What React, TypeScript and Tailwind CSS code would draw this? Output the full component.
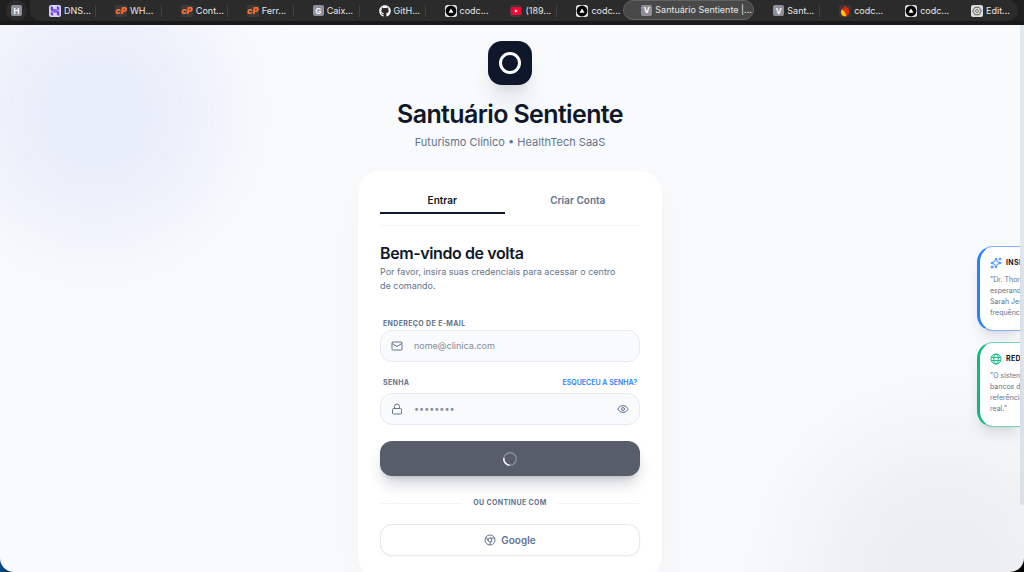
import React, { useState } from "react";
import { Eye, Lock, Sparkles } from "lucide-react";
import { FaGithub } from "react-icons/fa";
import { SiHostinger } from "react-icons/si";

const LetterIcon = ({ letter }: { letter: string }) => (
  <span className="flex size-[11px] shrink-0 items-center justify-center rounded-[2px] bg-[#8e8e9c] text-[8px] font-bold text-white">
    {letter}
  </span>
);

const CpanelIcon = () => (
  <span className="flex size-3 shrink-0 items-center justify-center rounded-[2px] bg-[#3a3a3a] text-[9px] leading-3 font-black text-[#ff6c2c] italic">
    cP
  </span>
);

const HostingerIcon = () => (
  <span className="flex size-3 shrink-0 items-center justify-center rounded-[2px] bg-[#dcd6f5] text-[#673de6]">
    <SiHostinger size={10} />
  </span>
);

const VercelIcon = () => (
  <svg viewBox="0 0 12 12" className="size-3 shrink-0">
    <rect width="12" height="12" rx="2.5" fill="#e6e6e6" />
    <circle cx="6" cy="6" r="5.4" fill="#000" />
    <path d="M6 3.4 8.5 7.8H3.5Z" fill="#fff" />
  </svg>
);

const YoutubeIcon = () => (
  <svg viewBox="0 0 12 12" className="size-3 shrink-0">
    <rect width="12" height="12" rx="2" fill="#3a3a3a" />
    <rect x="0.6" y="2" width="10.8" height="8" rx="2" fill="#f03" />
    <path d="M4.9 4.3 7.9 6 4.9 7.7Z" fill="#fff" />
  </svg>
);

const FlameIcon = () => (
  <svg viewBox="0 0 12 12" className="size-3 shrink-0">
    <rect width="12" height="12" rx="2" fill="#3d3533" />
    <path d="M5.8.6C7 1.6 7.6 2.6 8 3.4l.8-.7c1 1.2 1.7 2.7 1.5 4.5-.3 2.7-2.2 4.2-4.3 4.2S2 9.8 1.9 7.5c0-1.8.8-2.7 1.7-3.7C4.7 2.7 5.5 1.8 5.8.6Z" fill="#dd2c00" />
    <path d="M2.7 4.5c1.8.8 3.6 2.3 4.6 6.6-.4.2-.9.3-1.3.3C3.9 11.4 2 9.8 1.9 7.5c0-1.2.3-2.2.8-3Z" fill="#ffc400" />
  </svg>
);

const GearIcon = () => (
  <svg viewBox="0 0 12 12" className="size-3 shrink-0">
    <rect width="12" height="12" rx="2" fill="#dedede" />
    <path d="M4 2.3h4L10.3 6 8 9.7H4L1.7 6Z" fill="none" stroke="#777" strokeWidth="1.2" strokeLinejoin="round" />
    <circle cx="6" cy="6" r="1.5" fill="none" stroke="#777" strokeWidth="1" />
  </svg>
);

const MailIcon = () => (
  <svg viewBox="0 0 12 12" className="size-3" fill="none" stroke="currentColor" strokeWidth="1" strokeLinejoin="round">
    <rect x="1" y="2" width="10" height="8" rx="0.7" />
    <path d="M1.2 3.5 6 6.5l4.8-3" />
  </svg>
);

const GlobeIcon = () => (
  <svg viewBox="0 0 12 12" className="size-3" fill="none" stroke="currentColor" strokeWidth="1">
    <circle cx="6" cy="6" r="5" />
    <ellipse cx="6" cy="6" rx="2.2" ry="5" />
    <path d="M1.3 4.4h9.4M1.3 7.6h9.4" />
  </svg>
);

const ChromeIcon = () => (
  <svg viewBox="0 0 12 12" className="size-3" fill="none" stroke="currentColor" strokeWidth="1">
    <circle cx="6" cy="6" r="5" />
    <circle cx="6" cy="6" r="1.9" />
    <path d="M6 4.1h4.5M4.4 7 2.1 3.1M7.6 7 5.4 10.9" />
  </svg>
);

const leftTabs = [
  { label: "DNS...", icon: <HostingerIcon /> },
  { label: "WH...", icon: <CpanelIcon /> },
  { label: "Cont...", icon: <CpanelIcon /> },
  { label: "Ferr...", icon: <CpanelIcon /> },
  { label: "Caix...", icon: <LetterIcon letter="G" /> },
  { label: "GitH...", icon: <FaGithub size={12} className="shrink-0 text-white" /> },
  { label: "codc...", icon: <VercelIcon /> },
  { label: "(189...", icon: <YoutubeIcon /> },
  { label: "codc...", icon: <VercelIcon /> },
];

const rightTabs = [
  { label: "Sant...", icon: <LetterIcon letter="V" /> },
  { label: "codc...", icon: <FlameIcon /> },
  { label: "codc...", icon: <VercelIcon /> },
  { label: "Edit...", icon: <GearIcon /> },
];

const BrowserTab = ({ label, icon, last }: { label: string; icon: React.ReactNode; last: boolean }) => (
  <button
    type="button"
    className="flex min-w-0 flex-1 items-center gap-[3px] pl-[19px] whitespace-nowrap"
  >
    {icon}
    <span>{label}</span>
    {!last && <span className="ml-auto h-3 w-px bg-[#414141]" />}
  </button>
);

const TabStrip = () => (
  <nav className="flex h-[25px] shrink-0 items-start gap-[3px] border-b-4 border-[#1b1918] bg-[#1f1f1f] px-1.5 text-[9px] text-[#e8e8e8]">
    <button type="button" className="flex h-[21px] w-[21px] items-center justify-center rounded-full bg-[#2b2b2b]">
      <LetterIcon letter="H" />
    </button>
    <div className="flex h-[21px] min-w-0 flex-1 rounded-r-full rounded-bl-full bg-[#2b2b2b]">
      {leftTabs.map((tab, i) => (
        <BrowserTab key={i} {...tab} last={i === leftTabs.length - 1} />
      ))}
      <button
        type="button"
        className="flex h-5 w-[131px] shrink-0 items-center gap-[3px] rounded-full border border-[#626262] bg-[#484848] pl-[17px] whitespace-nowrap"
      >
        <LetterIcon letter="V" />
        <span>Santuário Sentiente |...</span>
      </button>
      {rightTabs.map((tab, i) => (
        <BrowserTab key={i} {...tab} last={i === rightTabs.length - 1} />
      ))}
    </div>
  </nav>
);

const insights = [
  {
    title: "INSIGHT",
    icon: <Sparkles size={12} />,
    border: "border-y-blue-500/60 border-l-blue-500",
    color: "text-blue-500",
    lines: ['"Dr. Thorne, há pacientes', "esperando. O exame de", "Sarah Jenkins mostra a", 'frequência elevada."'],
  },
  {
    title: "REDE",
    icon: <GlobeIcon />,
    border: "border-y-[#10b981]/60 border-l-[#10b981]",
    color: "text-[#10b981]",
    lines: ['"O sistema sincronizou os', "bancos de dados de", "referência em tempo", 'real."'],
  },
];

const App = () => {
  const [mode, setMode] = useState("login");
  const [email, setEmail] = useState("");
  const [password, setPassword] = useState("");
  const [showPassword, setShowPassword] = useState(false);

  const tabClass = (active: boolean) =>
    active
      ? "border-b-2 border-slate-900 text-slate-900"
      : "border-b-2 border-transparent text-slate-500";

  return (
    <div className="flex h-screen flex-col bg-black font-['Inter',sans-serif]">
      <TabStrip />
      <div className="min-h-0 flex-1 bg-linear-to-r from-[#0b4a86] via-black via-5% to-black">
        <div className="relative flex h-full overflow-hidden rounded-b-[14px] bg-[#f9fafc]">
          <div className="absolute -top-10 -left-8 size-64 rounded-full bg-[#2563eb]/8 blur-[44px]" />
          <div className="absolute -right-16 -bottom-36 size-72 rounded-full bg-slate-900/5 blur-[48px]" />

          <main className="relative flex min-w-0 flex-1 flex-col items-center overflow-hidden pt-4">
            <div className="flex size-11 shrink-0 items-center justify-center rounded-[14px] bg-slate-900 shadow-xl shadow-slate-900/10">
              <div className="size-[22px] rounded-full border-[3px] border-white" />
            </div>
            <h1 className="mt-3 text-[25px] leading-[34px] font-semibold tracking-tight text-slate-900">
              Santuário Sentiente
            </h1>
            <p className="mt-[3px] text-[11px] leading-4 text-slate-500">
              Futurismo Clínico • HealthTech SaaS
            </p>

            <section className="mt-[21px] w-full max-w-[304px] shrink-0 rounded-[22px] bg-white p-[22px] shadow-[0_16px_48px_rgba(15,23,42,0.03)]">
              <div className="flex gap-[11px] border-b border-slate-100 pb-[11px] text-[10px] leading-[15px] font-semibold">
                <button
                  type="button"
                  onClick={() => setMode("login")}
                  className={`flex-1 pb-1 ${tabClass(mode === "login")}`}
                >
                  Entrar
                </button>
                <button
                  type="button"
                  onClick={() => setMode("register")}
                  className={`flex-1 pb-1 ${tabClass(mode === "register")}`}
                >
                  Criar Conta
                </button>
              </div>

              <h2 className="mt-[15px] text-base leading-6 font-semibold tracking-tight text-slate-900">
                Bem-vindo de volta
              </h2>
              <p className="pr-4 text-[9px] leading-[14px] text-slate-500">
                Por favor, insira suas credenciais para acessar o centro de comando.
              </p>

              <form onSubmit={(e) => e.preventDefault()} className="mt-[25px]">
                <label
                  htmlFor="email"
                  className="block pl-[3px] text-[7px] leading-3 font-bold tracking-wider text-slate-500"
                >
                  ENDEREÇO DE E-MAIL
                </label>
                <div className="flex h-8 items-center rounded-[12px] border border-[#e7eaf3] bg-slate-50 px-2.5 text-slate-500">
                  <MailIcon />
                  <input
                    id="email"
                    type="email"
                    placeholder="nome@clinica.com"
                    value={email}
                    onChange={(e) => setEmail(e.target.value)}
                    className="ml-[11px] min-w-0 flex-1 text-[9px] placeholder:text-[#858b99] focus:outline-none"
                  />
                </div>

                <div className="mt-[15px] flex items-center justify-between px-[3px] text-[7px] leading-3">
                  <label htmlFor="password" className="font-bold tracking-wider text-slate-500">
                    SENHA
                  </label>
                  <a href="#" className="font-semibold text-blue-500 hover:underline">
                    ESQUECEU A SENHA?
                  </a>
                </div>
                <div className="mt-1 flex h-8 items-center rounded-[12px] border border-[#e7eaf3] bg-slate-50 px-2.5 text-slate-500">
                  <Lock size={12} />
                  <input
                    id="password"
                    type={showPassword ? "text" : "password"}
                    placeholder="••••••••"
                    value={password}
                    onChange={(e) => setPassword(e.target.value)}
                    className="ml-[11px] min-w-0 flex-1 text-[9px] placeholder:text-[#858b99] focus:outline-none"
                  />
                  <button
                    type="button"
                    aria-label="Mostrar senha"
                    onClick={() => setShowPassword((prev) => !prev)}
                  >
                    <Eye size={12} />
                  </button>
                </div>

                <button
                  type="submit"
                  aria-label="Entrar"
                  disabled
                  className="mt-4 flex h-[35px] w-full items-center justify-center rounded-[12px] bg-[#575d6b] shadow-lg shadow-slate-900/20"
                >
                  <svg viewBox="0 0 14 14" className="size-3.5" fill="none" strokeWidth="1.4">
                    <circle cx="7" cy="7" r="6.2" stroke="#fff" strokeOpacity="0.3" />
                    <path d="M.9 6A6.2 6.2 0 0 0 6.4 13.200" stroke="#fff" />
                  </svg>
                </button>
              </form>

              <div className="mt-[21px] flex items-center text-[7px] leading-3 font-bold tracking-wider text-slate-500">
                <span className="h-px flex-1 bg-slate-100" />
                <span className="px-[11px]">OU CONTINUE COM</span>
                <span className="h-px flex-1 bg-slate-100" />
              </div>

              <button
                type="button"
                className="mt-[15px] flex h-8 w-full items-center justify-center gap-[5px] rounded-[12px] border border-slate-200 bg-white text-[10px] font-semibold text-slate-500 shadow-xs"
              >
                <ChromeIcon />
                Google
              </button>
            </section>
          </main>

          <div className="h-[480px] w-1 shrink-0 rounded-b-full bg-slate-200" />

          <aside className="pointer-events-none absolute inset-y-0 right-1 flex w-[43px] flex-col gap-[11px] pt-[221px]">
            {insights.map((item) => (
              <div
                key={item.title}
                className={`h-[85px] rounded-l-[16px] border-y border-l-[3px] bg-white pt-2.5 pl-2.5 shadow-lg shadow-slate-900/10 ${item.border}`}
              >
                <div className="overflow-hidden whitespace-nowrap">
                  <div className={`flex items-center gap-1 ${item.color}`}>
                    <span className="shrink-0">{item.icon}</span>
                    <span className="text-[7px] leading-3 font-bold tracking-wider text-slate-900">
                      {item.title}
                    </span>
                  </div>
                  <p className="mt-[5px] text-[7px] leading-[11px] text-slate-500">
                    {item.lines.map((line) => (
                      <span key={line} className="block">
                        {line}
                      </span>
                    ))}
                  </p>
                </div>
              </div>
            ))}
          </aside>
        </div>
      </div>
    </div>
  );
};

export default App;
